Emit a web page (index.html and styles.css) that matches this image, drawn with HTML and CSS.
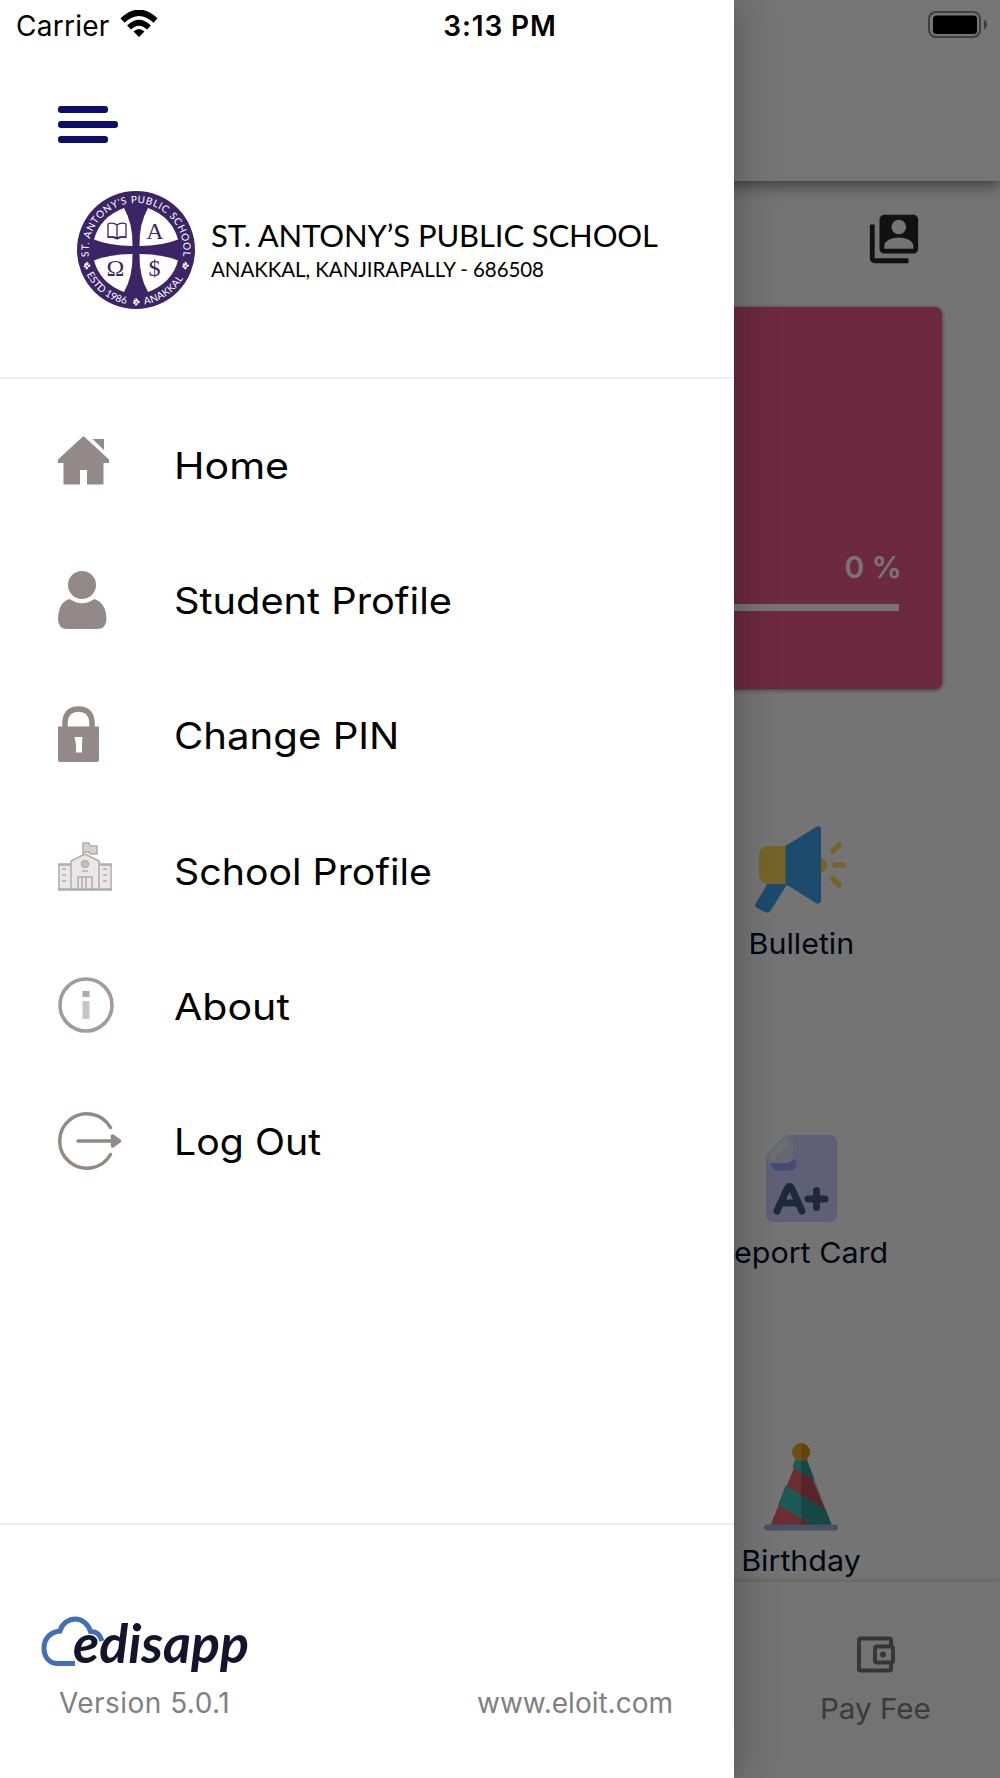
FILE: index.html
```
<!DOCTYPE html>
<html lang="en">

<head>
    <meta charset="UTF-8">
    <title>edisapp</title>
    <link rel="stylesheet" href="styles.css">
</head>

<body>
    <div class="app">
        <!-- home screen -->
        <div class="home">
            <header class="app-bar"></header>

            <main class="content">
                <div class="switch-row">
                    <svg class="switch-icon" viewBox="0 0 24 24">
                        <path fill-rule="evenodd" d="M4 6H2v14c0 1.1.9 2 2 2h14v-2H4V6zM20 2H8c-1.1 0-2 .9-2 2v12c0 1.1.9 2 2 2h12c1.1 0 2-.9 2-2V4c0-1.1-.9-2-2-2zm-6 2c1.66 0 3 1.34 3 3s-1.34 3-3 3-3-1.34-3-3 1.34-3 3-3zm6 12H8v-1.2c0-2.2 3.4-3.4 6-3.4s6 1.200 6 3.400V16z" />
                    </svg>
                </div>

                <section class="card">
                    <div class="percent">0 %</div>
                    <div class="progress"></div>
                </section>

                <div class="tiles">
                    <div class="tile">
                        <svg class="tile-icon" width="92" height="88" viewBox="0 0 92 88">
                            <path d="M13 57 1 77q-2 3 1 5l8 4q4 2 6-2l17-27z" fill="#3da3ed" />
                            <path d="M13 20h18v38H13q-9-1-9-10V30q0-9 9-10z" fill="#ffd95b" />
                            <path d="M65 32a7.300 7.300 0 0 1 0 14.600z" fill="#ffd95b" />
                            <path d="M30.500 20 61 1q5-2 5 2v71q0 5-5 3L30.500 58z" fill="#3da3ed" />
                            <path d="m78 25 6-6M80 39h8M78 53l6 6" stroke="#ffd95b" stroke-width="5.500" stroke-linecap="round" fill="none" />
                        </svg>
                        <span class="tile-label bulletin">Bulletin</span>
                    </div>
                    <div class="tile">
                        <svg class="tile-icon" width="72" height="88" viewBox="0 0 72 88">
                            <path d="M22 0h42q8 0 8 8v71q0 8-8 8H9q-8 0-8-8V21z" fill="#cfd1ff" />
                            <path d="M5 26h19q4 0 6-2 4 11-6 12H13q-7-1-8-10z" fill="#9aa7ff" />
                            <path d="M1 24q0-4 3-7L18 3q4-3 8-3 2 1 2 5v16q0 7-7 7H5q-4 0-4-4z" fill="#dfe1f8" />
                            <path d="M8 21 21 7" stroke="#edeffa" stroke-width="6" stroke-linecap="round" />
                            <path d="m12 76 10-22q2.500-5 5 0l10 22M17 68h15M43 64h17M51.500 55.500v17" stroke="#405d82" stroke-width="7" stroke-linecap="round" stroke-linejoin="round" fill="none" />
                        </svg>
                        <span class="tile-label report">Report Card</span>
                    </div>
                    <div class="tile">
                        <svg class="tile-icon" width="74" height="88" viewBox="0 0 74 88">
                            <path d="M37 8 6.500 82h61z" fill="#ed6570" />
                            <path d="M31.500 16 28.500 24 50.500 37 42.500 16zM21.500 42.500 14 62 48.500 82h19L62 67z" fill="#3ec4bc" />
                            <path d="M37 8v74h31L43 16z" fill="#000" opacity=".2" />
                            <path d="M3 84.500h68" stroke="#9cb1d4" stroke-width="6" stroke-linecap="round" />
                            <circle cx="37" cy="9" r="9" fill="#f5ad2b" />
                            <path d="M37 0a9 9 0 0 1 0 18z" fill="#dd9722" />
                        </svg>
                        <span class="tile-label birthday">Birthday</span>
                    </div>
                </div>
            </main>

            <nav class="bottom-nav">
                <div class="nav-item">
                    <svg class="nav-icon" width="40" height="38" viewBox="0 0 40 38" fill="none" stroke="#777" stroke-width="4">
                        <path d="M36 9V4q0-1.500-1.500-1.500h-29Q4 2.500 4 4v29q0 1.500 1.500 1.500h29Q36 34.500 36 33v-5" />
                        <rect x="20" y="10.500" width="18" height="16" rx="2" />
                        <circle cx="28" cy="18.500" r="3" fill="#777" stroke="none" />
                    </svg>
                    <span class="nav-label">Pay Fee</span>
                </div>
            </nav>
        </div>

        <div class="scrim"></div>

        <!-- side drawer -->
        <aside class="drawer">
            <div class="drawer-header">
                <div class="burger">
                    <i></i>
                    <i class="long"></i>
                    <i></i>
                </div>
                <div class="school">
                    <svg class="crest" width="120" height="120" viewBox="-60 -60 120 120">
                        <defs>
                            <path id="ringTop" d="M-47.100 6.600A47.500 47.500 0 1 1 47.100 6.600" />
                            <path id="ringLeft" d="M-49.300 24.300A55 55 0 0 0 -7 54.500" />
                            <path id="ringRight" d="M8.500 54.300A55 55 0 0 0 49.500 24" />
                            <path id="lobe" d="M-12-42Q-3-26-3.500-4-26-4-42-10.500-36-33-12-42z" />
                        </defs>
                        <circle r="59" fill="#3b2566" />
                        <g fill="#fff">
                            <use href="#lobe" />
                            <use href="#lobe" transform="scale(-1 1)" />
                            <use href="#lobe" transform="scale(1 -1)" />
                            <use href="#lobe" transform="scale(-1 -1)" />
                        </g>
                        <g class="ring-text">
                            <text><textPath href="#ringTop" textLength="161">ST. ANTONY'S PUBLIC SCHOOL</textPath></text>
                            <text><textPath href="#ringLeft" textLength="51">ESTD 1986</textPath></text>
                            <text><textPath href="#ringRight" textLength="48">ANAKKAL</textPath></text>
                        </g>
                        <g fill="none" stroke="#fff" stroke-width="2.400" stroke-dasharray="2 .7">
                            <path d="m-49.300 13.200 2.400 2.400-2.400 2.400-2.400-2.400zM49.200 13.200l2.400 2.400-2.400 2.400-2.400-2.400zM0 49.500l2.400 2.400-2.400 2.400-2.400-2.400z" />
                        </g>
                        <path d="M-19-25q-4-3-9-1v13q5-1 9 1 4-2 9-1v-13q-5-2-9 1v13M-28-12.500q5-1 9 1.500 4-2.500 9-1.500" fill="none" stroke="#3b2566" stroke-width="1.300" />
                        <g class="crest-letters">
                            <text x="19" y="-11">A</text>
                            <text x="-20.500" y="26">Ω</text>
                            <text x="18.500" y="26">$</text>
                        </g>
                    </svg>
                    <svg class="school-name" width="460" height="70" viewBox="0 0 460 70">
                        <text class="name" x="2" y="32" textLength="447">ST. ANTONY’S PUBLIC SCHOOL</text>
                        <text class="place" x="2" y="62" textLength="333">ANAKKAL, KANJIRAPALLY - 686508</text>
                    </svg>
                </div>
            </div>

            <ul class="menu">
                <li>
                    <span class="menu-icon">
                        <svg width="51" height="49" viewBox="0 0 51 49" fill="#938989">
                            <path d="M25.500 0 51 23.500V27h-5.500v21.500H29V34h-7v14.500H5.500V27H0v-3.500z" />
                            <path d="M34.500 3H46v11z" />
                        </svg>
                    </span>
                    <span class="label home-label">Home</span>
                </li>
                <li>
                    <span class="menu-icon">
                        <svg width="49" height="58" viewBox="0 0 49 58" fill="#938989">
                            <circle cx="24" cy="14" r="14" />
                            <path d="M11.500 28q12.500 8.500 25 0 11.500 4 12 20 0 10-10 10h-29q-9.500 0-9.500-10 .5-17 11.500-20z" />
                        </svg>
                    </span>
                    <span class="label student-label">Student Profile</span>
                </li>
                <li>
                    <span class="menu-icon">
                        <svg width="41" height="56" viewBox="0 0 41 56" fill="#938989">
                            <path d="M7 21v-5Q8 3 20.500 3T34 16v5" fill="none" stroke="#938989" stroke-width="5.500" />
                            <path d="M0 20.500h41V54q0 2-2 2H2q-2 0-2-2z" />
                            <path d="M16.500 31h8l-.5 8v7.500h-6V39z" fill="#fff" />
                        </svg>
                    </span>
                    <span class="label pin-label">Change PIN</span>
                </li>
                <li>
                    <span class="menu-icon">
                        <svg width="54" height="49" viewBox="0 0 54 49" fill="none" stroke="#b3acac" stroke-width="1.500">
                            <path d="M1 48V22h12v26M41 48V22h12v26M13 48V19l14-7 14 7v29" fill="#e9e7e7" />
                            <path d="M0 47.500h54" stroke-width="2.500" />
                            <path d="M25 14V1h6l1 3h7v8h-7l-1-2h-6" fill="#d5d1d1" />
                            <circle cx="27" cy="22" r="3.500" fill="#c4bebe" />
                            <path d="M20 47V35h14v12M24 47V35M28 47V35M24 29h6M4 27h4M4 33h4M4 39h4M45 27h4M45 33h4M45 39h4M0 23h13M41 23h13" />
                        </svg>
                    </span>
                    <span class="label school-label">School Profile</span>
                </li>
                <li>
                    <span class="menu-icon">
                        <svg width="56" height="56" viewBox="0 0 56 56">
                            <circle cx="28" cy="28" r="26" fill="none" stroke="#a39b9b" stroke-width="3.600" />
                            <path d="M24.500 14h7v6h-7z" fill="#aea7a7" />
                            <path d="M24.500 24h7v18h-7z" fill="#cac5c5" />
                        </svg>
                    </span>
                    <span class="label about-label">About</span>
                </li>
                <li>
                    <span class="menu-icon">
                        <svg width="64" height="58" viewBox="0 0 64 58" fill="none" stroke="#938989" stroke-width="3.400" stroke-linecap="round" stroke-linejoin="round">
                            <path d="M52.500 15.500A27.200 27.200 0 1 0 52.500 42.500" />
                            <path d="M20 29h34" />
                            <path d="M54.500 24v10l7-5z" fill="#938989" />
                        </svg>
                    </span>
                    <span class="label logout-label">Log Out</span>
                </li>
            </ul>

            <div class="drawer-footer">
                <svg class="brand" width="220" height="66" viewBox="0 0 220 66">
                    <path d="M34 49.500H17C8 49.500 3 43 3 34s6-16 16-17C21 9 28 5 34.500 5S47 10 49.500 17.500Q58 17 61 27" fill="none" stroke="#426fb5" stroke-width="5" />
                    <text class="brand-text" x="32" y="49" textLength="176" lengthAdjust="spacingAndGlyphs">edisapp</text>
                </svg>
                <div class="footer-row">
                    <span class="version">Version 5.0.1</span>
                    <span class="site">www.eloit.com</span>
                </div>
            </div>
        </aside>

        <!-- status bar -->
        <div class="status-bar">
            <div class="carrier">
                <span>Carrier</span>
                <svg width="38" height="28" viewBox="0 0 38 28">
                    <path d="M2.500 10.500Q19-5 35.500 10.500" fill="none" stroke="#000" stroke-width="6" />
                    <path d="M9 17.500q10-9.500 20 0" fill="none" stroke="#000" stroke-width="5.500" />
                    <path d="M13.500 21.500q5.500-5 11 0L19 27z" />
                </svg>
            </div>
            <div class="time">3:13 PM</div>
            <svg class="battery" width="60" height="28" viewBox="0 0 60 28">
                <rect x="1" y="1" width="51" height="25" rx="7" fill="none" stroke="#404040" stroke-width="2" />
                <rect x="5" y="4.500" width="44" height="18.500" rx="3.500" />
                <path d="M56 8.500q3 1.500 3 5t-3 5z" fill="#404040" />
            </svg>
        </div>
    </div>
</body>

</html>
```
FILE: styles.css
```
* {
    box-sizing: border-box;
}

body {
    margin: 0;
    font-family: "Inter", "Liberation Sans", sans-serif;
}

.app {
    position: relative;
    width: 1000px;
    height: 1778px;
    overflow: hidden;
    background-color: #fdfdfd;
}

/* home screen */
.home {
    display: flex;
    flex-direction: column;
    height: 100%;
}

.app-bar {
    flex: none;
    height: 181px;
    background-color: #fff;
    box-shadow: 0 4px 16px rgba(0, 0, 0, 0.5);
}

.content {
    flex: 1;
    min-height: 0;
    padding: 29px 58px 0;
}

.switch-row {
    display: flex;
    justify-content: flex-end;
    height: 97px;
    padding-right: 19px;
}

.switch-icon {
    width: 58px;
    height: 58px;
    fill: #252525;
}

.card {
    height: 382px;
    padding: 241px 43px 0;
    border-radius: 7px;
    background-color: #ed5b8b;
    color: #fff;
    text-align: right;
    box-shadow: 0 1px 4px rgba(0, 0, 0, 0.5);
}

.percent {
    height: 56px;
    margin-right: -3px;
    font-size: 30px;
    line-height: 38px;
    font-weight: 600;
}

.progress {
    height: 7px;
    background-color: #fff;
}

.tiles {
    display: flex;
    flex-direction: column;
    align-items: flex-end;
    padding-top: 137px;
}

.tile {
    display: flex;
    flex-direction: column;
    align-items: center;
    width: 282px;
    height: 308.700px;
}

.tile-label {
    margin-top: 12px;
    font-size: 29px;
    line-height: 36px;
    color: #020d29;
    white-space: nowrap;
    transform: scaleX(1.05);
}

.bottom-nav {
    display: flex;
    flex: none;
    justify-content: flex-end;
    height: 196px;
    background-color: #fafafa;
    box-shadow: 0 0 8px rgba(0, 0, 0, 0.2);
    z-index: 1;
}

.nav-item {
    display: flex;
    flex-direction: column;
    align-items: center;
    width: 250px;
    padding-top: 54px;
    font-size: 29px;
    line-height: 36px;
    color: #808080;
}

.nav-icon {
    margin-bottom: 17px;
}

.nav-label {
    transform: scaleX(1.02);
}

.scrim {
    position: absolute;
    inset: 0;
    z-index: 2;
    background-color: rgba(0, 0, 0, 0.54);
}

/* side drawer */
.drawer {
    position: absolute;
    top: 0;
    left: 0;
    z-index: 3;
    display: flex;
    flex-direction: column;
    width: 734px;
    height: 100%;
    background-color: #fff;
    box-shadow: 0 0 40px rgba(0, 0, 0, 0.3);
}

.drawer-header {
    height: 379px;
    padding: 106px 0 0 58px;
    border-bottom: 2px solid #eee;
}

.burger {
    display: flex;
    flex-direction: column;
    gap: 8px;
}

.burger i {
    width: 50px;
    height: 7px;
    border-radius: 3px;
    background-color: #0b0f6b;
}

.burger .long {
    width: 60px;
}

.school {
    display: flex;
    padding: 47px 0 0 18px;
}

.ring-text {
    font-family: "Lato", sans-serif;
    font-size: 10px;
    fill: #fff;
}

.crest-letters {
    font-family: "Liberation Serif", serif;
    font-size: 24px;
    text-anchor: middle;
    fill: #3b2566;
}

.school-name {
    margin: 25px 0 0 13px;
    font-family: "Lato", sans-serif;
}

.name {
    font-size: 31px;
}

.place {
    font-size: 20.500px;
}

.menu {
    margin: 0;
    padding: 57px 0 0 58px;
    list-style: none;
}

.menu li {
    display: flex;
    height: 135.200px;
}

.menu-icon {
    width: 116px;
}

/* labels are set slightly wide */
.label {
    padding-top: 7px;
    font-size: 37px;
    line-height: 46px;
    color: #000;
    transform-origin: left;
}

.home-label,
.about-label {
    transform: scaleX(1.11);
}

.student-label {
    transform: scaleX(1.075);
}

.pin-label {
    transform: scaleX(1.085);
}

.school-label,
.logout-label {
    transform: scaleX(1.062);
}

.drawer-footer {
    margin-top: auto;
    height: 255px;
    border-top: 2px solid #eee;
    padding: 89px 61px 0 41px;
}

.brand {
    display: block;
    overflow: visible;
}

.brand-text {
    font-family: "Lato", sans-serif;
    font-size: 53px;
    font-weight: bold;
    font-style: italic;
    fill: #14142c;
}

.footer-row {
    display: flex;
    justify-content: space-between;
    padding: 5px 0 0 18px;
    font-size: 28px;
    line-height: 36px;
    color: #808080;
}

.version {
    letter-spacing: 0.45px;
}

/* status bar */
.status-bar {
    position: absolute;
    top: 0;
    left: 0;
    z-index: 4;
    display: grid;
    grid-template-columns: 1fr 1fr 1fr;
    align-items: start;
    width: 100%;
    padding: 10px 12px 0 16px;
    font-size: 28px;
    line-height: 32px;
}

.carrier {
    display: flex;
    gap: 10px;
    letter-spacing: 0.250px;
}

.time {
    margin-left: -4px;
    text-align: center;
    font-weight: 600;
    letter-spacing: 0.900px;
}

.battery {
    justify-self: end;
    margin-top: 1px;
}
```
